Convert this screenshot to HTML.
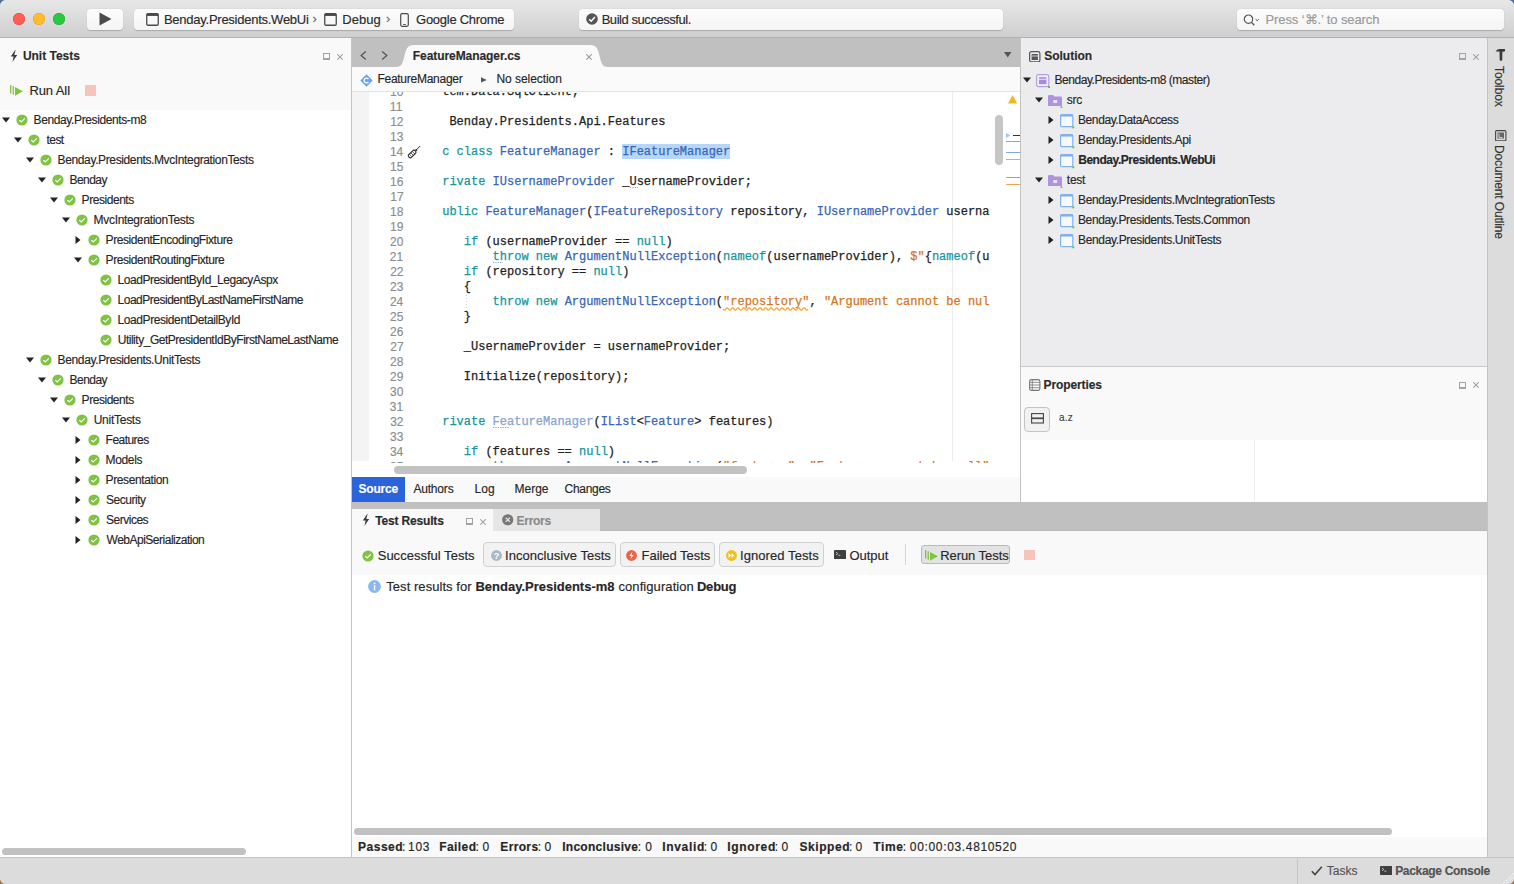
<!DOCTYPE html>
<html><head><meta charset="utf-8"><style>
*{box-sizing:border-box;margin:0;padding:0}
html,body{width:1514px;height:884px;overflow:hidden}
body{background:linear-gradient(#4d6f9c 0,#4d6f9c 50%,#a9763f 50%,#a9763f 100%);font-family:"Liberation Sans",sans-serif;color:#262626;position:relative}
.a{position:absolute}
.t{position:absolute;white-space:nowrap;line-height:1;-webkit-text-stroke:0.15px currentColor}
#win{position:absolute;left:0;top:0;width:1514px;height:884px;border-radius:6px;overflow:hidden;background:#dcdcdc}
.tbox{position:absolute;background:linear-gradient(#fcfcfc,#f4f4f4);border-radius:4px;box-shadow:0 0.5px 1px rgba(0,0,0,.2)}
.btn{position:absolute;background:#f2f2f2;border:1px solid #d0d0d0;border-radius:4px}
</style></head><body><div id="win">
<div class="a" style="left:0px;top:0px;width:1514px;height:37px;background:linear-gradient(#e7e7e7,#cfcfcf)"></div>
<div class="a" style="left:0px;top:37px;width:1514px;height:1px;background:#b1b1b1"></div>
<div class="a" style="left:13.100000000000001px;top:13.1px;width:12px;height:12px;border-radius:50%;background:#fe5f57;box-shadow:inset 0 0 0 0.5px #e2463f"></div>
<div class="a" style="left:33.1px;top:13.1px;width:12px;height:12px;border-radius:50%;background:#febc2e;box-shadow:inset 0 0 0 0.5px #e0a025"></div>
<div class="a" style="left:53.1px;top:13.1px;width:12px;height:12px;border-radius:50%;background:#28c840;box-shadow:inset 0 0 0 0.5px #1fae30"></div>
<div class="tbox" style="left:87px;top:8.5px;width:36px;height:21.5px"></div>
<svg class="a" style="left:99px;top:12px;" width="13" height="14" viewBox="0 0 13 14"><path d="M0.5 0.5 L12.5 7 L0.5 13.5Z" fill="#4a4a4a"/></svg>
<div class="tbox" style="left:133.5px;top:8.5px;width:380px;height:21.5px"></div>
<svg class="a" style="left:145.7px;top:12.8px;" width="13" height="13" viewBox="0 0 13 13"><rect x="0.75" y="0.75" width="11.5" height="11.5" rx="1.2" fill="none" stroke="#4a4a4a" stroke-width="1.3"/><rect x="0.75" y="0.75" width="11.5" height="2.2" fill="#4a4a4a"/></svg>
<div class="t" style="left:163.95px;top:12.50px;font-size:13px;color:#2a2a2a;letter-spacing:-0.255px;">Benday.Presidents.WebUi</div>
<div class="t" style="left:312.45px;top:12.00px;font-size:13px;color:#6a6a6a;">›</div>
<svg class="a" style="left:324.3px;top:12.8px;" width="13" height="13" viewBox="0 0 13 13"><rect x="0.75" y="0.75" width="11.5" height="11.5" rx="1.2" fill="none" stroke="#4a4a4a" stroke-width="1.3"/><rect x="0.75" y="0.75" width="11.5" height="2.2" fill="#4a4a4a"/></svg>
<div class="t" style="left:342.25px;top:12.50px;font-size:13px;color:#2a2a2a;letter-spacing:0.062px;">Debug</div>
<div class="t" style="left:385.95px;top:12.00px;font-size:13px;color:#6a6a6a;">›</div>
<svg class="a" style="left:399.5px;top:12.5px;" width="9" height="14" viewBox="0 0 9 14"><rect x="0.7" y="0.7" width="7.6" height="12.6" rx="1.5" fill="none" stroke="#4a4a4a" stroke-width="1.2"/><rect x="3" y="11" width="3" height="0.8" fill="#4a4a4a"/></svg>
<div class="t" style="left:416.05px;top:12.50px;font-size:13px;color:#2a2a2a;letter-spacing:-0.271px;">Google Chrome</div>
<div class="tbox" style="left:579px;top:8.5px;width:424px;height:21.5px"></div>
<svg class="a" style="left:586px;top:13px;" width="12" height="12" viewBox="0 0 12 12"><circle cx="6" cy="6" r="5.8" fill="#555"/><path d="M3.2 6.2 L5.2 8.2 L8.9 3.9" fill="none" stroke="#fff" stroke-width="1.5"/></svg>
<div class="t" style="left:601.65px;top:12.50px;font-size:13px;color:#2a2a2a;letter-spacing:-0.444px;">Build successful.</div>
<div class="tbox" style="left:1237px;top:8.5px;width:267px;height:21.5px"></div>
<svg class="a" style="left:1243px;top:13.5px;" width="17" height="13" viewBox="0 0 17 13"><circle cx="5.5" cy="5.2" r="4.2" fill="none" stroke="#555" stroke-width="1.2"/><path d="M8.4 8.2 L11.3 11.3" stroke="#555" stroke-width="1.3"/><path d="M12.6 5.2 L14.2 6.7 L15.8 5.2" fill="none" stroke="#555" stroke-width="1"/></svg>
<div class="t" style="left:1265.45px;top:12.50px;font-size:13px;color:#9a9a9a;letter-spacing:-0.095px;">Press ‘⌘.’ to search</div>
<div class="a" style="left:0px;top:38px;width:351px;height:72px;background:#f9f9f9"></div>
<div class="a" style="left:0px;top:110px;width:351px;height:747px;background:#ffffff"></div>
<div class="a" style="left:351px;top:38px;width:1px;height:819px;background:#c6c6c6"></div>
<svg class="a" style="left:10.2px;top:50.2px;" width="8" height="12" viewBox="0 0 8 12"><path d="M5.2 0 L0.8 6.6 L3.6 6.6 L2.4 12 L7.2 4.9 L4.3 4.9 L5.6 0Z" fill="#3a3a3a"/></svg>
<div class="t" style="left:22.90px;top:49.84px;font-size:12px;font-weight:700;color:#2b2b2b;letter-spacing:-0.006px;">Unit Tests</div>
<svg class="a" style="left:323.1px;top:53.1px;" width="7" height="7" viewBox="0 0 7 7"><rect x="0.5" y="0.5" width="6" height="6" fill="none" stroke="#a3a3a3" stroke-width="1"/><rect x="0.5" y="5" width="6" height="1.5" fill="#a3a3a3"/></svg><svg class="a" style="left:336.90000000000003px;top:53.9px;" width="6" height="6" viewBox="0 0 6 6"><path d="M0.3 0.3 L5.7 5.7 M5.7 0.3 L0.3 5.7" stroke="#a3a3a3" stroke-width="1.1"/></svg>
<svg class="a" style="left:9.9px;top:84.5px;" width="13" height="11.5" viewBox="0 0 13 11.5"><rect x="0" y="0" width="1.3" height="8.5" fill="#82c341"/><rect x="2.6" y="1.2" width="1.3" height="8.5" fill="#82c341"/><path d="M5 1.9 L12.9 6.3 L5 10.8Z" fill="#82c341"/></svg>
<div class="t" style="left:29.45px;top:84.30px;font-size:13px;color:#262626;letter-spacing:-0.100px;">Run All</div>
<div class="a" style="left:84.7px;top:84.6px;width:11.200000000000003px;height:11.200000000000003px;background:#f7c4bb"></div>
<svg class="a" style="left:1.7000000000000002px;top:116.7px;" width="8" height="6" viewBox="0 0 8 6"><path d="M0 0.5 L8 0.5 L4 5.5Z" fill="#222"/></svg>
<svg class="a" style="left:16.35px;top:114.2px;" width="12" height="12" viewBox="0 0 12 12"><circle cx="6" cy="6" r="5.6" fill="#80c342"/><path d="M3.3 6.1 L5.2 7.9 L8.8 4.3" fill="none" stroke="#fff" stroke-width="1.2"/></svg>
<div class="t" style="left:33.60px;top:113.64px;font-size:12px;color:#262626;letter-spacing:-0.389px;">Benday.Presidents-m8</div>
<svg class="a" style="left:13.7px;top:136.7px;" width="8" height="6" viewBox="0 0 8 6"><path d="M0 0.5 L8 0.5 L4 5.5Z" fill="#222"/></svg>
<svg class="a" style="left:28.35px;top:134.2px;" width="12" height="12" viewBox="0 0 12 12"><circle cx="6" cy="6" r="5.6" fill="#80c342"/><path d="M3.3 6.1 L5.2 7.9 L8.8 4.3" fill="none" stroke="#fff" stroke-width="1.2"/></svg>
<div class="t" style="left:46.45px;top:133.64px;font-size:12px;color:#262626;letter-spacing:-0.533px;">test</div>
<svg class="a" style="left:25.7px;top:156.7px;" width="8" height="6" viewBox="0 0 8 6"><path d="M0 0.5 L8 0.5 L4 5.5Z" fill="#222"/></svg>
<svg class="a" style="left:40.35px;top:154.2px;" width="12" height="12" viewBox="0 0 12 12"><circle cx="6" cy="6" r="5.6" fill="#80c342"/><path d="M3.3 6.1 L5.2 7.9 L8.8 4.3" fill="none" stroke="#fff" stroke-width="1.2"/></svg>
<div class="t" style="left:57.60px;top:153.64px;font-size:12px;color:#262626;letter-spacing:-0.376px;">Benday.Presidents.MvcIntegrationTests</div>
<svg class="a" style="left:37.7px;top:176.7px;" width="8" height="6" viewBox="0 0 8 6"><path d="M0 0.5 L8 0.5 L4 5.5Z" fill="#222"/></svg>
<svg class="a" style="left:52.35px;top:174.2px;" width="12" height="12" viewBox="0 0 12 12"><circle cx="6" cy="6" r="5.6" fill="#80c342"/><path d="M3.3 6.1 L5.2 7.9 L8.8 4.3" fill="none" stroke="#fff" stroke-width="1.2"/></svg>
<div class="t" style="left:69.60px;top:173.64px;font-size:12px;color:#262626;letter-spacing:-0.580px;">Benday</div>
<svg class="a" style="left:49.7px;top:196.7px;" width="8" height="6" viewBox="0 0 8 6"><path d="M0 0.5 L8 0.5 L4 5.5Z" fill="#222"/></svg>
<svg class="a" style="left:64.35px;top:194.2px;" width="12" height="12" viewBox="0 0 12 12"><circle cx="6" cy="6" r="5.6" fill="#80c342"/><path d="M3.3 6.1 L5.2 7.9 L8.8 4.3" fill="none" stroke="#fff" stroke-width="1.2"/></svg>
<div class="t" style="left:81.60px;top:193.64px;font-size:12px;color:#262626;letter-spacing:-0.450px;">Presidents</div>
<svg class="a" style="left:61.7px;top:216.7px;" width="8" height="6" viewBox="0 0 8 6"><path d="M0 0.5 L8 0.5 L4 5.5Z" fill="#222"/></svg>
<svg class="a" style="left:76.35px;top:214.2px;" width="12" height="12" viewBox="0 0 12 12"><circle cx="6" cy="6" r="5.6" fill="#80c342"/><path d="M3.3 6.1 L5.2 7.9 L8.8 4.3" fill="none" stroke="#fff" stroke-width="1.2"/></svg>
<div class="t" style="left:93.60px;top:213.64px;font-size:12px;color:#262626;letter-spacing:-0.319px;">MvcIntegrationTests</div>
<svg class="a" style="left:75.2px;top:235.7px;" width="6" height="8" viewBox="0 0 6 8"><path d="M0.5 0 L5.5 4 L0.5 8Z" fill="#222"/></svg>
<svg class="a" style="left:88.35px;top:234.2px;" width="12" height="12" viewBox="0 0 12 12"><circle cx="6" cy="6" r="5.6" fill="#80c342"/><path d="M3.3 6.1 L5.2 7.9 L8.8 4.3" fill="none" stroke="#fff" stroke-width="1.2"/></svg>
<div class="t" style="left:105.60px;top:233.64px;font-size:12px;color:#262626;letter-spacing:-0.439px;">PresidentEncodingFixture</div>
<svg class="a" style="left:73.7px;top:256.7px;" width="8" height="6" viewBox="0 0 8 6"><path d="M0 0.5 L8 0.5 L4 5.5Z" fill="#222"/></svg>
<svg class="a" style="left:88.35px;top:254.2px;" width="12" height="12" viewBox="0 0 12 12"><circle cx="6" cy="6" r="5.6" fill="#80c342"/><path d="M3.3 6.1 L5.2 7.9 L8.8 4.3" fill="none" stroke="#fff" stroke-width="1.2"/></svg>
<div class="t" style="left:105.60px;top:253.64px;font-size:12px;color:#262626;letter-spacing:-0.441px;">PresidentRoutingFixture</div>
<svg class="a" style="left:100.35px;top:274.2px;" width="12" height="12" viewBox="0 0 12 12"><circle cx="6" cy="6" r="5.6" fill="#80c342"/><path d="M3.3 6.1 L5.2 7.9 L8.8 4.3" fill="none" stroke="#fff" stroke-width="1.2"/></svg>
<div class="t" style="left:117.60px;top:273.64px;font-size:12px;color:#262626;letter-spacing:-0.478px;">LoadPresidentById_LegacyAspx</div>
<svg class="a" style="left:100.35px;top:294.2px;" width="12" height="12" viewBox="0 0 12 12"><circle cx="6" cy="6" r="5.6" fill="#80c342"/><path d="M3.3 6.1 L5.2 7.9 L8.8 4.3" fill="none" stroke="#fff" stroke-width="1.2"/></svg>
<div class="t" style="left:117.60px;top:293.64px;font-size:12px;color:#262626;letter-spacing:-0.500px;">LoadPresidentByLastNameFirstName</div>
<svg class="a" style="left:100.35px;top:314.2px;" width="12" height="12" viewBox="0 0 12 12"><circle cx="6" cy="6" r="5.6" fill="#80c342"/><path d="M3.3 6.1 L5.2 7.9 L8.8 4.3" fill="none" stroke="#fff" stroke-width="1.2"/></svg>
<div class="t" style="left:117.60px;top:313.64px;font-size:12px;color:#262626;letter-spacing:-0.418px;">LoadPresidentDetailById</div>
<svg class="a" style="left:100.35px;top:334.2px;" width="12" height="12" viewBox="0 0 12 12"><circle cx="6" cy="6" r="5.6" fill="#80c342"/><path d="M3.3 6.1 L5.2 7.9 L8.8 4.3" fill="none" stroke="#fff" stroke-width="1.2"/></svg>
<div class="t" style="left:117.70px;top:333.64px;font-size:12px;color:#262626;letter-spacing:-0.476px;">Utility_GetPresidentIdByFirstNameLastName</div>
<svg class="a" style="left:25.7px;top:356.7px;" width="8" height="6" viewBox="0 0 8 6"><path d="M0 0.5 L8 0.5 L4 5.5Z" fill="#222"/></svg>
<svg class="a" style="left:40.35px;top:354.2px;" width="12" height="12" viewBox="0 0 12 12"><circle cx="6" cy="6" r="5.6" fill="#80c342"/><path d="M3.3 6.1 L5.2 7.9 L8.8 4.3" fill="none" stroke="#fff" stroke-width="1.2"/></svg>
<div class="t" style="left:57.60px;top:353.64px;font-size:12px;color:#262626;letter-spacing:-0.373px;">Benday.Presidents.UnitTests</div>
<svg class="a" style="left:37.7px;top:376.7px;" width="8" height="6" viewBox="0 0 8 6"><path d="M0 0.5 L8 0.5 L4 5.5Z" fill="#222"/></svg>
<svg class="a" style="left:52.35px;top:374.2px;" width="12" height="12" viewBox="0 0 12 12"><circle cx="6" cy="6" r="5.6" fill="#80c342"/><path d="M3.3 6.1 L5.2 7.9 L8.8 4.3" fill="none" stroke="#fff" stroke-width="1.2"/></svg>
<div class="t" style="left:69.60px;top:373.64px;font-size:12px;color:#262626;letter-spacing:-0.560px;">Benday</div>
<svg class="a" style="left:49.7px;top:396.7px;" width="8" height="6" viewBox="0 0 8 6"><path d="M0 0.5 L8 0.5 L4 5.5Z" fill="#222"/></svg>
<svg class="a" style="left:64.35px;top:394.2px;" width="12" height="12" viewBox="0 0 12 12"><circle cx="6" cy="6" r="5.6" fill="#80c342"/><path d="M3.3 6.1 L5.2 7.9 L8.8 4.3" fill="none" stroke="#fff" stroke-width="1.2"/></svg>
<div class="t" style="left:81.60px;top:393.64px;font-size:12px;color:#262626;letter-spacing:-0.461px;">Presidents</div>
<svg class="a" style="left:61.7px;top:416.7px;" width="8" height="6" viewBox="0 0 8 6"><path d="M0 0.5 L8 0.5 L4 5.5Z" fill="#222"/></svg>
<svg class="a" style="left:76.35px;top:414.2px;" width="12" height="12" viewBox="0 0 12 12"><circle cx="6" cy="6" r="5.6" fill="#80c342"/><path d="M3.3 6.1 L5.2 7.9 L8.8 4.3" fill="none" stroke="#fff" stroke-width="1.2"/></svg>
<div class="t" style="left:93.70px;top:413.64px;font-size:12px;color:#262626;letter-spacing:-0.262px;">UnitTests</div>
<svg class="a" style="left:75.2px;top:435.7px;" width="6" height="8" viewBox="0 0 6 8"><path d="M0.5 0 L5.5 4 L0.5 8Z" fill="#222"/></svg>
<svg class="a" style="left:88.35px;top:434.2px;" width="12" height="12" viewBox="0 0 12 12"><circle cx="6" cy="6" r="5.6" fill="#80c342"/><path d="M3.3 6.1 L5.2 7.9 L8.8 4.3" fill="none" stroke="#fff" stroke-width="1.2"/></svg>
<div class="t" style="left:105.60px;top:433.64px;font-size:12px;color:#262626;letter-spacing:-0.543px;">Features</div>
<svg class="a" style="left:75.2px;top:455.7px;" width="6" height="8" viewBox="0 0 6 8"><path d="M0.5 0 L5.5 4 L0.5 8Z" fill="#222"/></svg>
<svg class="a" style="left:88.35px;top:454.2px;" width="12" height="12" viewBox="0 0 12 12"><circle cx="6" cy="6" r="5.6" fill="#80c342"/><path d="M3.3 6.1 L5.2 7.9 L8.8 4.3" fill="none" stroke="#fff" stroke-width="1.2"/></svg>
<div class="t" style="left:105.60px;top:453.64px;font-size:12px;color:#262626;letter-spacing:-0.370px;">Models</div>
<svg class="a" style="left:75.2px;top:475.7px;" width="6" height="8" viewBox="0 0 6 8"><path d="M0.5 0 L5.5 4 L0.5 8Z" fill="#222"/></svg>
<svg class="a" style="left:88.35px;top:474.2px;" width="12" height="12" viewBox="0 0 12 12"><circle cx="6" cy="6" r="5.6" fill="#80c342"/><path d="M3.3 6.1 L5.2 7.9 L8.8 4.3" fill="none" stroke="#fff" stroke-width="1.2"/></svg>
<div class="t" style="left:105.60px;top:473.64px;font-size:12px;color:#262626;letter-spacing:-0.391px;">Presentation</div>
<svg class="a" style="left:75.2px;top:495.7px;" width="6" height="8" viewBox="0 0 6 8"><path d="M0.5 0 L5.5 4 L0.5 8Z" fill="#222"/></svg>
<svg class="a" style="left:88.35px;top:494.2px;" width="12" height="12" viewBox="0 0 12 12"><circle cx="6" cy="6" r="5.6" fill="#80c342"/><path d="M3.3 6.1 L5.2 7.9 L8.8 4.3" fill="none" stroke="#fff" stroke-width="1.2"/></svg>
<div class="t" style="left:106.05px;top:493.64px;font-size:12px;color:#262626;letter-spacing:-0.486px;">Security</div>
<svg class="a" style="left:75.2px;top:515.7px;" width="6" height="8" viewBox="0 0 6 8"><path d="M0.5 0 L5.5 4 L0.5 8Z" fill="#222"/></svg>
<svg class="a" style="left:88.35px;top:514.2px;" width="12" height="12" viewBox="0 0 12 12"><circle cx="6" cy="6" r="5.6" fill="#80c342"/><path d="M3.3 6.1 L5.2 7.9 L8.8 4.3" fill="none" stroke="#fff" stroke-width="1.2"/></svg>
<div class="t" style="left:106.05px;top:513.64px;font-size:12px;color:#262626;letter-spacing:-0.500px;">Services</div>
<svg class="a" style="left:75.2px;top:535.7px;" width="6" height="8" viewBox="0 0 6 8"><path d="M0.5 0 L5.5 4 L0.5 8Z" fill="#222"/></svg>
<svg class="a" style="left:88.35px;top:534.2px;" width="12" height="12" viewBox="0 0 12 12"><circle cx="6" cy="6" r="5.6" fill="#80c342"/><path d="M3.3 6.1 L5.2 7.9 L8.8 4.3" fill="none" stroke="#fff" stroke-width="1.2"/></svg>
<div class="t" style="left:106.55px;top:533.64px;font-size:12px;color:#262626;letter-spacing:-0.497px;">WebApiSerialization</div>
<div class="a" style="left:2px;top:848.2px;width:244px;height:6.599999999999909px;background:#c1c1c1;border-radius:4px"></div>
<div class="a" style="left:352px;top:38px;width:668px;height:29px;background:#c0c0c0"></div>
<div class="a" style="left:1020px;top:38px;width:1px;height:464px;background:#c4c4c4"></div>
<svg class="a" style="left:359.5px;top:50.5px;" width="7" height="9" viewBox="0 0 7 9"><path d="M5.8 0.6 L1.2 4.5 L5.8 8.4" fill="none" stroke="#555" stroke-width="1.3"/></svg>
<svg class="a" style="left:380.5px;top:50.5px;" width="7" height="9" viewBox="0 0 7 9"><path d="M1.2 0.6 L5.8 4.5 L1.2 8.4" fill="none" stroke="#555" stroke-width="1.3"/></svg>
<svg class="a" style="left:390px;top:44px;" width="230" height="23" viewBox="0 0 230 23"><path d="M5 23 C11 23 12 21 14 14 C16 5 17 1 24 1 L200 1 C207 1 208 5 210 14 C212 21 213 23 219 23 Z" fill="#fafafa"/></svg>
<div class="t" style="left:412.80px;top:49.84px;font-size:12px;font-weight:700;color:#2b2b2b;letter-spacing:-0.066px;">FeatureManager.cs</div>
<svg class="a" style="left:586px;top:54px;" width="6" height="6" viewBox="0 0 6 6"><path d="M0.3 0.3 L5.7 5.7 M5.7 0.3 L0.3 5.7" stroke="#9a9a9a" stroke-width="1.1"/></svg>
<svg class="a" style="left:1004px;top:52px;" width="8" height="6" viewBox="0 0 8 6"><path d="M0 0 L7.5 0 L3.75 5.5Z" fill="#555"/></svg>
<div class="a" style="left:352px;top:67px;width:668px;height:24px;background:#fafafa"></div>
<div class="a" style="left:352px;top:91px;width:668px;height:1px;background:#e3e3e3"></div>
<svg class="a" style="left:359.7px;top:73.8px;" width="13" height="13" viewBox="0 0 13 13"><path d="M6.5 0.3 L12.7 6.5 L6.5 12.7 L0.3 6.5Z" fill="#6aa3ea"/><path d="M8.4 5.0 A2.4 2.4 0 1 0 8.4 8.0" fill="none" stroke="#fff" stroke-width="1.3"/></svg>
<div class="t" style="left:377.40px;top:73.04px;font-size:12px;color:#262626;letter-spacing:-0.258px;">FeatureManager</div>
<svg class="a" style="left:480.8px;top:77px;" width="6" height="6" viewBox="0 0 6 6"><path d="M0 0.2 L5.8 2.9 L0 5.6Z" fill="#555"/></svg>
<div class="t" style="left:496.50px;top:73.04px;font-size:12px;color:#262626;letter-spacing:-0.059px;">No selection</div>
<div class="a" style="left:352px;top:92px;width:668px;height:385px;background:#ffffff"></div>
<div class="a" style="left:352px;top:92px;width:17px;height:369px;background:#f4f4f4"></div>
<div class="a" style="left:952px;top:92px;width:1px;height:369px;background:#ececec"></div>
<div class="a" style="left:621.7px;top:144px;width:108.0px;height:15px;background:#b6d6f7"></div>
<div class="a" style="left:0;top:92px;width:991px;height:371px;overflow:hidden"><div class="a" style="left:0;top:-92px;width:991px;height:500px"><div class="t" style="left:390.05px;top:85.80px;font-size:12px;color:#8c8c8c;font-family:"Liberation Mono",monospace;">10</div><div class="t" style="left:442.2px;top:85.80px;font-size:12px;font-family:'Liberation Mono',monospace;color:#222222;white-space:pre;-webkit-text-stroke:0.25px currentColor"><span style="color:#222222">tem.Data.SqlClient;</span></div><div class="t" style="left:389.85px;top:100.80px;font-size:12px;color:#8c8c8c;font-family:"Liberation Mono",monospace;">11</div><div class="t" style="left:390.15px;top:115.80px;font-size:12px;color:#8c8c8c;font-family:"Liberation Mono",monospace;">12</div><div class="t" style="left:442.2px;top:115.80px;font-size:12px;font-family:'Liberation Mono',monospace;color:#222222;white-space:pre;-webkit-text-stroke:0.25px currentColor"><span style="color:#222222"> Benday.Presidents.Api.Features</span></div><div class="t" style="left:390.05px;top:130.80px;font-size:12px;color:#8c8c8c;font-family:"Liberation Mono",monospace;">13</div><div class="t" style="left:389.90px;top:145.80px;font-size:12px;color:#8c8c8c;font-family:"Liberation Mono",monospace;">14</div><div class="t" style="left:442.2px;top:145.80px;font-size:12px;font-family:'Liberation Mono',monospace;color:#222222;white-space:pre;-webkit-text-stroke:0.25px currentColor"><span style="color:#17969b">c class</span><span style="color:#222222"> </span><span style="color:#3866b4">FeatureManager</span><span style="color:#222222"> : </span><span style="color:#3866b4">IFeatureManager</span></div><div class="t" style="left:390.05px;top:160.80px;font-size:12px;color:#8c8c8c;font-family:"Liberation Mono",monospace;">15</div><div class="t" style="left:390.05px;top:175.80px;font-size:12px;color:#8c8c8c;font-family:"Liberation Mono",monospace;">16</div><div class="t" style="left:442.2px;top:175.80px;font-size:12px;font-family:'Liberation Mono',monospace;color:#222222;white-space:pre;-webkit-text-stroke:0.25px currentColor"><span style="color:#17969b">rivate</span><span style="color:#222222"> </span><span style="color:#3866b4">IUsernameProvider</span><span style="color:#222222"> _UsernameProvider;</span></div><div class="t" style="left:390.25px;top:190.80px;font-size:12px;color:#8c8c8c;font-family:"Liberation Mono",monospace;">17</div><div class="t" style="left:390.10px;top:205.80px;font-size:12px;color:#8c8c8c;font-family:"Liberation Mono",monospace;">18</div><div class="t" style="left:442.2px;top:205.80px;font-size:12px;font-family:'Liberation Mono',monospace;color:#222222;white-space:pre;-webkit-text-stroke:0.25px currentColor"><span style="color:#17969b">ublic</span><span style="color:#222222"> </span><span style="color:#3866b4">FeatureManager</span><span style="color:#222222">(</span><span style="color:#3866b4">IFeatureRepository</span><span style="color:#222222"> repository, </span><span style="color:#3866b4">IUsernameProvider</span><span style="color:#222222"> userna</span></div><div class="t" style="left:390.10px;top:220.80px;font-size:12px;color:#8c8c8c;font-family:"Liberation Mono",monospace;">19</div><div class="t" style="left:390.05px;top:235.80px;font-size:12px;color:#8c8c8c;font-family:"Liberation Mono",monospace;">20</div><div class="t" style="left:442.2px;top:235.80px;font-size:12px;font-family:'Liberation Mono',monospace;color:#222222;white-space:pre;-webkit-text-stroke:0.25px currentColor"><span style="color:#222222">   </span><span style="color:#17969b">if</span><span style="color:#222222"> (usernameProvider == </span><span style="color:#17969b">null</span><span style="color:#222222">)</span></div><div class="t" style="left:389.85px;top:250.80px;font-size:12px;color:#8c8c8c;font-family:"Liberation Mono",monospace;">21</div><div class="t" style="left:442.2px;top:250.80px;font-size:12px;font-family:'Liberation Mono',monospace;color:#222222;white-space:pre;-webkit-text-stroke:0.25px currentColor"><span style="color:#222222">       </span><span style="color:#17969b">throw new</span><span style="color:#222222"> </span><span style="color:#3866b4">ArgumentNullException</span><span style="color:#222222">(</span><span style="color:#17969b">nameof</span><span style="color:#222222">(usernameProvider), </span><span style="color:#d6761b">$&quot;</span><span style="color:#222222">{</span><span style="color:#17969b">nameof</span><span style="color:#222222">(u</span></div><div class="t" style="left:390.15px;top:265.80px;font-size:12px;color:#8c8c8c;font-family:"Liberation Mono",monospace;">22</div><div class="t" style="left:442.2px;top:265.80px;font-size:12px;font-family:'Liberation Mono',monospace;color:#222222;white-space:pre;-webkit-text-stroke:0.25px currentColor"><span style="color:#222222">   </span><span style="color:#17969b">if</span><span style="color:#222222"> (repository == </span><span style="color:#17969b">null</span><span style="color:#222222">)</span></div><div class="t" style="left:390.05px;top:280.80px;font-size:12px;color:#8c8c8c;font-family:"Liberation Mono",monospace;">23</div><div class="t" style="left:442.2px;top:280.80px;font-size:12px;font-family:'Liberation Mono',monospace;color:#222222;white-space:pre;-webkit-text-stroke:0.25px currentColor"><span style="color:#222222">   {</span></div><div class="t" style="left:389.90px;top:295.80px;font-size:12px;color:#8c8c8c;font-family:"Liberation Mono",monospace;">24</div><div class="t" style="left:442.2px;top:295.80px;font-size:12px;font-family:'Liberation Mono',monospace;color:#222222;white-space:pre;-webkit-text-stroke:0.25px currentColor"><span style="color:#222222">       </span><span style="color:#17969b">throw new</span><span style="color:#222222"> </span><span style="color:#3866b4">ArgumentNullException</span><span style="color:#222222">(</span><span style="color:#d6761b">&quot;repository&quot;</span><span style="color:#222222">, </span><span style="color:#d6761b">&quot;Argument cannot be nul</span></div><div class="t" style="left:390.05px;top:310.80px;font-size:12px;color:#8c8c8c;font-family:"Liberation Mono",monospace;">25</div><div class="t" style="left:442.2px;top:310.80px;font-size:12px;font-family:'Liberation Mono',monospace;color:#222222;white-space:pre;-webkit-text-stroke:0.25px currentColor"><span style="color:#222222">   }</span></div><div class="t" style="left:390.05px;top:325.80px;font-size:12px;color:#8c8c8c;font-family:"Liberation Mono",monospace;">26</div><div class="t" style="left:390.25px;top:340.80px;font-size:12px;color:#8c8c8c;font-family:"Liberation Mono",monospace;">27</div><div class="t" style="left:442.2px;top:340.80px;font-size:12px;font-family:'Liberation Mono',monospace;color:#222222;white-space:pre;-webkit-text-stroke:0.25px currentColor"><span style="color:#222222">   _UsernameProvider = usernameProvider;</span></div><div class="t" style="left:390.10px;top:355.80px;font-size:12px;color:#8c8c8c;font-family:"Liberation Mono",monospace;">28</div><div class="t" style="left:390.10px;top:370.80px;font-size:12px;color:#8c8c8c;font-family:"Liberation Mono",monospace;">29</div><div class="t" style="left:442.2px;top:370.80px;font-size:12px;font-family:'Liberation Mono',monospace;color:#222222;white-space:pre;-webkit-text-stroke:0.25px currentColor"><span style="color:#222222">   Initialize(repository);</span></div><div class="t" style="left:390.05px;top:385.80px;font-size:12px;color:#8c8c8c;font-family:"Liberation Mono",monospace;">30</div><div class="t" style="left:389.85px;top:400.80px;font-size:12px;color:#8c8c8c;font-family:"Liberation Mono",monospace;">31</div><div class="t" style="left:390.15px;top:415.80px;font-size:12px;color:#8c8c8c;font-family:"Liberation Mono",monospace;">32</div><div class="t" style="left:442.2px;top:415.80px;font-size:12px;font-family:'Liberation Mono',monospace;color:#222222;white-space:pre;-webkit-text-stroke:0.25px currentColor"><span style="color:#17969b">rivate</span><span style="color:#222222"> </span><span style="color:#86a3d2">FeatureManager</span><span style="color:#222222">(</span><span style="color:#3866b4">IList</span><span style="color:#222222">&lt;</span><span style="color:#3866b4">Feature</span><span style="color:#222222">&gt; features)</span></div><div class="t" style="left:390.05px;top:430.80px;font-size:12px;color:#8c8c8c;font-family:"Liberation Mono",monospace;">33</div><div class="t" style="left:389.90px;top:445.80px;font-size:12px;color:#8c8c8c;font-family:"Liberation Mono",monospace;">34</div><div class="t" style="left:442.2px;top:445.80px;font-size:12px;font-family:'Liberation Mono',monospace;color:#222222;white-space:pre;-webkit-text-stroke:0.25px currentColor"><span style="color:#222222">   </span><span style="color:#17969b">if</span><span style="color:#222222"> (features == </span><span style="color:#17969b">null</span><span style="color:#222222">)</span></div><div class="t" style="left:390.05px;top:460.80px;font-size:12px;color:#8c8c8c;font-family:"Liberation Mono",monospace;">35</div><div class="t" style="left:442.2px;top:460.80px;font-size:12px;font-family:'Liberation Mono',monospace;color:#222222;white-space:pre;-webkit-text-stroke:0.25px currentColor"><span style="color:#222222">       </span><span style="color:#17969b">throw new</span><span style="color:#222222"> </span><span style="color:#3866b4">ArgumentNullException</span><span style="color:#222222">(</span><span style="color:#d6761b">&quot;features&quot;</span><span style="color:#222222">, </span><span style="color:#d6761b">&quot;Features cannot be null&quot;</span></div></div></div>
<svg class="a" style="left:722.8px;top:307px;" width="86" height="4" viewBox="0 0 86 4"><path d="M0.00 2.00 L0.50 2.65 L1.00 3.09 L1.50 3.19 L2.00 2.91 L2.50 2.34 L3.00 1.66 L3.50 1.09 L4.00 0.81 L4.50 0.91 L5.00 1.35 L5.50 2.00 L6.00 2.65 L6.50 3.09 L7.00 3.19 L7.50 2.91 L8.00 2.34 L8.50 1.66 L9.00 1.09 L9.50 0.81 L10.00 0.91 L10.50 1.35 L11.00 2.00 L11.50 2.65 L12.00 3.09 L12.50 3.19 L13.00 2.91 L13.50 2.34 L14.00 1.66 L14.50 1.09 L15.00 0.81 L15.50 0.91 L16.00 1.35 L16.50 2.00 L17.00 2.65 L17.50 3.09 L18.00 3.19 L18.50 2.91 L19.00 2.34 L19.50 1.66 L20.00 1.09 L20.50 0.81 L21.00 0.91 L21.50 1.35 L22.00 2.00 L22.50 2.65 L23.00 3.09 L23.50 3.19 L24.00 2.91 L24.50 2.34 L25.00 1.66 L25.50 1.09 L26.00 0.81 L26.50 0.91 L27.00 1.35 L27.50 2.00 L28.00 2.65 L28.50 3.09 L29.00 3.19 L29.50 2.91 L30.00 2.34 L30.50 1.66 L31.00 1.09 L31.50 0.81 L32.00 0.91 L32.50 1.35 L33.00 2.00 L33.50 2.65 L34.00 3.09 L34.50 3.19 L35.00 2.91 L35.50 2.34 L36.00 1.66 L36.50 1.09 L37.00 0.81 L37.50 0.91 L38.00 1.35 L38.50 2.00 L39.00 2.65 L39.50 3.09 L40.00 3.19 L40.50 2.91 L41.00 2.34 L41.50 1.66 L42.00 1.09 L42.50 0.81 L43.00 0.91 L43.50 1.35 L44.00 2.00 L44.50 2.65 L45.00 3.09 L45.50 3.19 L46.00 2.91 L46.50 2.34 L47.00 1.66 L47.50 1.09 L48.00 0.81 L48.50 0.91 L49.00 1.35 L49.50 2.00 L50.00 2.65 L50.50 3.09 L51.00 3.19 L51.50 2.91 L52.00 2.34 L52.50 1.66 L53.00 1.09 L53.50 0.81 L54.00 0.91 L54.50 1.35 L55.00 2.00 L55.50 2.65 L56.00 3.09 L56.50 3.19 L57.00 2.91 L57.50 2.34 L58.00 1.66 L58.50 1.09 L59.00 0.81 L59.50 0.91 L60.00 1.35 L60.50 2.00 L61.00 2.65 L61.50 3.09 L62.00 3.19 L62.50 2.91 L63.00 2.34 L63.50 1.66 L64.00 1.09 L64.50 0.81 L65.00 0.91 L65.50 1.35 L66.00 2.00 L66.50 2.65 L67.00 3.09 L67.50 3.19 L68.00 2.91 L68.50 2.34 L69.00 1.66 L69.50 1.09 L70.00 0.81 L70.50 0.91 L71.00 1.35 L71.50 2.00 L72.00 2.65 L72.50 3.09 L73.00 3.19 L73.50 2.91 L74.00 2.34 L74.50 1.66 L75.00 1.09 L75.50 0.81 L76.00 0.91 L76.50 1.35 L77.00 2.00 L77.50 2.65 L78.00 3.09 L78.50 3.19 L79.00 2.91 L79.50 2.34 L80.00 1.66 L80.50 1.09 L81.00 0.81 L81.50 0.91 L82.00 1.35 L82.50 2.00 L83.00 2.65 L83.50 3.09 L84.00 3.19 L84.50 2.91 L85.00 2.34" fill="none" stroke="#f5a73a" stroke-width="1.3"/></svg>
<svg class="a" style="left:492.59999999999997px;top:427px;" width="16" height="2" viewBox="0 0 16 2"><path d="M0 0.5 H16" stroke="#7aa0e0" stroke-width="1" stroke-dasharray="1.2 1.2"/></svg>
<svg class="a" style="left:629.9px;top:187px;" width="8" height="2" viewBox="0 0 8 2"><path d="M0 0.5 H8" stroke="#7aa0e0" stroke-width="1" stroke-dasharray="1.2 1.2"/></svg>
<svg class="a" style="left:492.59999999999997px;top:262px;" width="10" height="2" viewBox="0 0 10 2"><path d="M0 0.5 H10" stroke="#7aa0e0" stroke-width="1" stroke-dasharray="1.2 1.2"/></svg>
<div class="a" style="left:465.5px;top:289px;width:1.0px;height:22px;background:repeating-linear-gradient(#d8d8d8 0 1px,transparent 1px 3px)"></div>
<svg class="a" style="left:407px;top:145px;" width="14" height="14" viewBox="0 0 14 14"><path d="M9 5.2 L13.2 1" stroke="#333" stroke-width="1"/><path d="M8.6 4.4 L9.8 5.6" stroke="#333" stroke-width="1.8"/><g transform="rotate(-45 5 9)"><rect x="0.6" y="7.2" width="9" height="3.8" rx="1.9" fill="#fff" stroke="#333" stroke-width="1.1"/><path d="M3 7.4 V10.8 M5 7.4 V10.8 M7 7.4 V10.8" stroke="#333" stroke-width="0.7"/></g></svg>
<div class="a" style="left:394px;top:466px;width:353px;height:8px;background:#c2c2c2;border-radius:4px"></div>
<div class="a" style="left:995px;top:114.7px;width:8px;height:50.7px;background:#c6c6c6;border-radius:4px"></div>
<svg class="a" style="left:1008.3px;top:94.5px;" width="10" height="9" viewBox="0 0 10 9"><path d="M4.6 0 L9.3 8.5 L0 8.5Z" fill="#ecb824"/></svg>
<svg class="a" style="left:1005.5px;top:132.5px;" width="5" height="5" viewBox="0 0 5 5"><path d="M0 0 L4.5 2.5 L0 5Z" fill="#9fc9ef"/></svg>
<div class="a" style="left:1013px;top:135px;width:7px;height:1.1999999999999886px;background:#333"></div>
<div class="a" style="left:1006px;top:140.6px;width:14px;height:1.5999999999999943px;background:#7fa6e6"></div>
<div class="a" style="left:1006px;top:151.5px;width:14px;height:1.5999999999999943px;background:#7fa6e6"></div>
<div class="a" style="left:1006px;top:158.5px;width:14px;height:1.5999999999999943px;background:#f0a64a"></div>
<div class="a" style="left:1006px;top:176.5px;width:14px;height:1.5999999999999943px;background:#7fa6e6"></div>
<div class="a" style="left:1006px;top:183.6px;width:14px;height:1.5999999999999943px;background:#f0a64a"></div>
<div class="a" style="left:352px;top:477px;width:668px;height:25px;background:#f9f9f9"></div>
<div class="a" style="left:352px;top:477px;width:52.80000000000001px;height:25px;background:#2b63da"></div>
<div class="t" style="left:358.55px;top:482.94px;font-size:12px;font-weight:700;color:#ffffff;letter-spacing:-0.220px;">Source</div>
<div class="t" style="left:413.40px;top:482.94px;font-size:12px;color:#262626;letter-spacing:-0.183px;">Authors</div>
<div class="t" style="left:474.40px;top:482.94px;font-size:12px;color:#262626;letter-spacing:0.125px;">Log</div>
<div class="t" style="left:514.50px;top:482.94px;font-size:12px;color:#262626;">Merge</div>
<div class="t" style="left:564.50px;top:482.94px;font-size:12px;color:#262626;letter-spacing:-0.283px;">Changes</div>
<div class="a" style="left:1021px;top:38px;width:466px;height:328px;background:#ececef"></div>
<div class="a" style="left:1021px;top:366px;width:466px;height:1px;background:#c9c9cc"></div>
<svg class="a" style="left:1029px;top:50.6px;" width="11.5" height="11.5" viewBox="0 0 11.5 11.5"><rect x="0.6" y="0.6" width="10.3" height="10.3" rx="1.8" fill="none" stroke="#555" stroke-width="1.2"/><rect x="2.6" y="3" width="6.3" height="6" fill="#555"/><rect x="2.6" y="4.6" width="6.3" height="0.8" fill="#ececef"/></svg>
<div class="t" style="left:1044.15px;top:49.84px;font-size:12px;font-weight:700;color:#2b2b2b;">Solution</div>
<svg class="a" style="left:1458.7px;top:53.2px;" width="7" height="7" viewBox="0 0 7 7"><rect x="0.5" y="0.5" width="6" height="6" fill="none" stroke="#a3a3a3" stroke-width="1"/><rect x="0.5" y="5" width="6" height="1.5" fill="#a3a3a3"/></svg><svg class="a" style="left:1472.5px;top:54.0px;" width="6" height="6" viewBox="0 0 6 6"><path d="M0.3 0.3 L5.7 5.7 M5.7 0.3 L0.3 5.7" stroke="#a3a3a3" stroke-width="1.1"/></svg>
<svg class="a" style="left:1022.5px;top:76.7px;" width="8" height="6" viewBox="0 0 8 6"><path d="M0 0.5 L8 0.5 L4 5.5Z" fill="#222"/></svg>
<svg class="a" style="left:1036px;top:74.0px;" width="14" height="14" viewBox="0 0 14 14"><rect x="0.6" y="0.6" width="12.2" height="12" rx="1.8" fill="#f3effa" stroke="#b79fe0" stroke-width="1.2"/><rect x="3" y="3.2" width="7.4" height="7" fill="#a98bdc"/><rect x="3" y="4.8" width="7.4" height="0.9" fill="#f3effa"/><rect x="12" y="12" width="2" height="2" fill="#6ac13a"/></svg>
<div class="t" style="left:1054.50px;top:73.64px;font-size:12px;color:#262626;letter-spacing:-0.455px;">Benday.Presidents-m8 (master)</div>
<svg class="a" style="left:1034.5px;top:96.7px;" width="8" height="6" viewBox="0 0 8 6"><path d="M0 0.5 L8 0.5 L4 5.5Z" fill="#222"/></svg>
<svg class="a" style="left:1048px;top:94.5px;" width="15" height="13" viewBox="0 0 15 13"><path d="M0 1.2 Q0 0 1.2 0 L5 0 L6.5 1.6 L13 1.6 Q14 1.6 14 2.6 L14 11 L0 11Z" fill="#ae93de"/><rect x="5.2" y="5" width="4" height="3" fill="#e9e1f7"/><rect x="12.5" y="11.5" width="2" height="2" fill="#6ac13a"/></svg>
<div class="t" style="left:1066.65px;top:93.64px;font-size:12px;color:#262626;letter-spacing:-0.175px;">src</div>
<svg class="a" style="left:1048px;top:115.7px;" width="6" height="8" viewBox="0 0 6 8"><path d="M0.5 0 L5.5 4 L0.5 8Z" fill="#222"/></svg>
<svg class="a" style="left:1060.2px;top:114.0px;" width="15" height="15" viewBox="0 0 15 15"><rect x="0.6" y="0.6" width="12.2" height="12" rx="1.2" fill="#f7f9fd" stroke="#7fb1ef" stroke-width="1.2"/><rect x="0.6" y="0.6" width="12.2" height="2" fill="#7fb1ef"/><rect x="12.3" y="12.3" width="2" height="2" fill="#6ac13a"/></svg>
<div class="t" style="left:1078.00px;top:113.64px;font-size:12px;color:#262626;letter-spacing:-0.406px;">Benday.DataAccess</div>
<svg class="a" style="left:1048px;top:135.7px;" width="6" height="8" viewBox="0 0 6 8"><path d="M0.5 0 L5.5 4 L0.5 8Z" fill="#222"/></svg>
<svg class="a" style="left:1060.2px;top:134.0px;" width="15" height="15" viewBox="0 0 15 15"><rect x="0.6" y="0.6" width="12.2" height="12" rx="1.2" fill="#f7f9fd" stroke="#7fb1ef" stroke-width="1.2"/><rect x="0.6" y="0.6" width="12.2" height="2" fill="#7fb1ef"/><rect x="12.3" y="12.3" width="2" height="2" fill="#6ac13a"/></svg>
<div class="t" style="left:1078.00px;top:133.64px;font-size:12px;color:#262626;letter-spacing:-0.370px;">Benday.Presidents.Api</div>
<svg class="a" style="left:1048px;top:155.7px;" width="6" height="8" viewBox="0 0 6 8"><path d="M0.5 0 L5.5 4 L0.5 8Z" fill="#222"/></svg>
<svg class="a" style="left:1060.2px;top:154.0px;" width="15" height="15" viewBox="0 0 15 15"><rect x="0.6" y="0.6" width="12.2" height="12" rx="1.2" fill="#f7f9fd" stroke="#7fb1ef" stroke-width="1.2"/><rect x="0.6" y="0.6" width="12.2" height="2" fill="#7fb1ef"/><rect x="12.3" y="12.3" width="2" height="2" fill="#6ac13a"/></svg>
<div class="t" style="left:1078.20px;top:153.64px;font-size:12px;font-weight:700;color:#262626;letter-spacing:-0.461px;">Benday.Presidents.WebUi</div>
<svg class="a" style="left:1034.5px;top:176.7px;" width="8" height="6" viewBox="0 0 8 6"><path d="M0 0.5 L8 0.5 L4 5.5Z" fill="#222"/></svg>
<svg class="a" style="left:1048px;top:174.5px;" width="15" height="13" viewBox="0 0 15 13"><path d="M0 1.2 Q0 0 1.2 0 L5 0 L6.5 1.6 L13 1.6 Q14 1.6 14 2.6 L14 11 L0 11Z" fill="#ae93de"/><rect x="5.2" y="5" width="4" height="3" fill="#e9e1f7"/><rect x="12.5" y="11.5" width="2" height="2" fill="#6ac13a"/></svg>
<div class="t" style="left:1066.85px;top:173.64px;font-size:12px;color:#262626;letter-spacing:-0.267px;">test</div>
<svg class="a" style="left:1048px;top:195.7px;" width="6" height="8" viewBox="0 0 6 8"><path d="M0.5 0 L5.5 4 L0.5 8Z" fill="#222"/></svg>
<svg class="a" style="left:1060.2px;top:194.0px;" width="15" height="15" viewBox="0 0 15 15"><rect x="0.6" y="0.6" width="12.2" height="12" rx="1.2" fill="#f7f9fd" stroke="#7fb1ef" stroke-width="1.2"/><rect x="0.6" y="0.6" width="12.2" height="2" fill="#7fb1ef"/><rect x="12.3" y="12.3" width="2" height="2" fill="#6ac13a"/></svg>
<div class="t" style="left:1078.00px;top:193.64px;font-size:12px;color:#262626;letter-spacing:-0.360px;">Benday.Presidents.MvcIntegrationTests</div>
<svg class="a" style="left:1048px;top:215.7px;" width="6" height="8" viewBox="0 0 6 8"><path d="M0.5 0 L5.5 4 L0.5 8Z" fill="#222"/></svg>
<svg class="a" style="left:1060.2px;top:214.0px;" width="15" height="15" viewBox="0 0 15 15"><rect x="0.6" y="0.6" width="12.2" height="12" rx="1.2" fill="#f7f9fd" stroke="#7fb1ef" stroke-width="1.2"/><rect x="0.6" y="0.6" width="12.2" height="2" fill="#7fb1ef"/><rect x="12.3" y="12.3" width="2" height="2" fill="#6ac13a"/></svg>
<div class="t" style="left:1078.00px;top:213.64px;font-size:12px;color:#262626;letter-spacing:-0.381px;">Benday.Presidents.Tests.Common</div>
<svg class="a" style="left:1048px;top:235.7px;" width="6" height="8" viewBox="0 0 6 8"><path d="M0.5 0 L5.5 4 L0.5 8Z" fill="#222"/></svg>
<svg class="a" style="left:1060.2px;top:234.0px;" width="15" height="15" viewBox="0 0 15 15"><rect x="0.6" y="0.6" width="12.2" height="12" rx="1.2" fill="#f7f9fd" stroke="#7fb1ef" stroke-width="1.2"/><rect x="0.6" y="0.6" width="12.2" height="2" fill="#7fb1ef"/><rect x="12.3" y="12.3" width="2" height="2" fill="#6ac13a"/></svg>
<div class="t" style="left:1078.00px;top:233.64px;font-size:12px;color:#262626;letter-spacing:-0.350px;">Benday.Presidents.UnitTests</div>
<div class="a" style="left:1021px;top:367px;width:466px;height:72.5px;background:#f9f9f9"></div>
<div class="a" style="left:1021px;top:439.5px;width:466px;height:62.5px;background:#ffffff"></div>
<div class="a" style="left:1254.3px;top:439.5px;width:1.0px;height:62.5px;background:#ededed"></div>
<svg class="a" style="left:1029px;top:379px;" width="11.5" height="12" viewBox="0 0 11.5 12"><rect x="0.6" y="0.6" width="10.3" height="10.8" rx="1.8" fill="none" stroke="#777" stroke-width="1.1"/><path d="M0.6 3.3 H10.9 M0.6 6 H10.9 M0.6 8.7 H10.9 M3.3 0.6 V11.4" stroke="#777" stroke-width="0.8"/></svg>
<div class="t" style="left:1043.50px;top:378.84px;font-size:12px;font-weight:700;color:#2b2b2b;letter-spacing:-0.100px;">Properties</div>
<svg class="a" style="left:1458.7px;top:381.5px;" width="7" height="7" viewBox="0 0 7 7"><rect x="0.5" y="0.5" width="6" height="6" fill="none" stroke="#a3a3a3" stroke-width="1"/><rect x="0.5" y="5" width="6" height="1.5" fill="#a3a3a3"/></svg><svg class="a" style="left:1472.5px;top:382.3px;" width="6" height="6" viewBox="0 0 6 6"><path d="M0.3 0.3 L5.7 5.7 M5.7 0.3 L0.3 5.7" stroke="#a3a3a3" stroke-width="1.1"/></svg>
<div class="a" style="left:1024px;top:406.5px;width:26px;height:25px;border:1px solid #c4c4c4;border-radius:4px;background:#f1f1f1"></div>
<svg class="a" style="left:1030.5px;top:413px;" width="13" height="11" viewBox="0 0 13 11"><rect x="0.6" y="0.6" width="11.8" height="4.4" fill="none" stroke="#444" stroke-width="1.1"/><rect x="0.6" y="5.6" width="11.8" height="4.4" fill="none" stroke="#444" stroke-width="1.1"/></svg>
<div class="t" style="left:1058.90px;top:413.14px;font-size:10px;color:#444444;letter-spacing:0.225px;">a.z</div>
<div class="a" style="left:1487px;top:38px;width:1px;height:819px;background:#c4c4c4"></div>
<div class="a" style="left:1488px;top:38px;width:26px;height:819px;background:#dcdcdc"></div>
<svg class="a" style="left:1494px;top:48px;" width="13" height="14" viewBox="0 0 13 14"><path d="M1.6 3.6 Q2.6 1.2 5.5 1.0 L10.4 0.9 Q11.3 1.0 11.2 2.2 Q11.1 3.6 10 3.7 L5.8 3.6 Q3.5 3.4 1.6 3.6Z" fill="#3a3a3a"/><path d="M5.5 3 L8.4 3 L8.2 12.2 Q7 13.2 5.7 12.2Z" fill="#3a3a3a"/></svg>
<div class="t" style="left:1505.23px;top:66.15px;font-size:12px;color:#333;letter-spacing:-0.092px;transform-origin:0 0;transform:rotate(90deg)">Toolbox</div>
<svg class="a" style="left:1495.2px;top:129.5px;" width="11.5" height="11.5" viewBox="0 0 11.5 11.5"><rect x="0.6" y="0.6" width="10.3" height="10.3" rx="1" fill="none" stroke="#444" stroke-width="1.1"/><rect x="2.5" y="2.5" width="6.5" height="6" fill="#666"/><path d="M4 3.5 V7.5 H7.5" stroke="#ddd" stroke-width="0.9" fill="none"/></svg>
<div class="t" style="left:1505.23px;top:144.80px;font-size:12px;color:#333;letter-spacing:-0.143px;transform-origin:0 0;transform:rotate(90deg)">Document Outline</div>
<div class="a" style="left:352px;top:502px;width:1135px;height:29px;background:#c0c0c0"></div>
<div class="a" style="left:352px;top:509px;width:141px;height:22px;background:#f9f9f9"></div>
<div class="a" style="left:493px;top:509px;width:107px;height:22px;background:#e6e6e6"></div>
<div class="a" style="left:600px;top:530px;width:887px;height:1px;background:#b9b9b9"></div>
<svg class="a" style="left:362px;top:513.5px;" width="8" height="12" viewBox="0 0 8 12"><path d="M5.2 0 L0.8 6.6 L3.6 6.6 L2.4 12 L7.2 4.9 L4.3 4.9 L5.6 0Z" fill="#3a3a3a"/></svg>
<div class="t" style="left:375.35px;top:514.74px;font-size:12px;font-weight:700;color:#2b2b2b;letter-spacing:-0.177px;">Test Results</div>
<svg class="a" style="left:466px;top:518.2px;" width="7" height="7" viewBox="0 0 7 7"><rect x="0.5" y="0.5" width="6" height="6" fill="none" stroke="#a3a3a3" stroke-width="1"/><rect x="0.5" y="5" width="6" height="1.5" fill="#a3a3a3"/></svg><svg class="a" style="left:479.8px;top:519.0px;" width="6" height="6" viewBox="0 0 6 6"><path d="M0.3 0.3 L5.7 5.7 M5.7 0.3 L0.3 5.7" stroke="#a3a3a3" stroke-width="1.1"/></svg>
<svg class="a" style="left:502.2px;top:514.3px;" width="11.5" height="11.5" viewBox="0 0 11.5 11.5"><circle cx="5.75" cy="5.75" r="5.6" fill="#777"/><path d="M3.6 3.6 L7.9 7.9 M7.9 3.6 L3.6 7.9" stroke="#e6e6e6" stroke-width="1.3"/></svg>
<div class="t" style="left:516.60px;top:514.74px;font-size:12px;font-weight:700;color:#8a8a8a;letter-spacing:-0.290px;">Errors</div>
<div class="a" style="left:352px;top:531px;width:1135px;height:43.5px;background:#f9f9f9"></div>
<svg class="a" style="left:362.15px;top:549.5px;" width="12" height="12" viewBox="0 0 12 12"><circle cx="6" cy="6" r="5.6" fill="#80c342"/><path d="M3.3 6.1 L5.2 7.9 L8.8 4.3" fill="none" stroke="#fff" stroke-width="1.2"/></svg>
<div class="t" style="left:377.70px;top:548.80px;font-size:13px;color:#262626;letter-spacing:0.017px;">Successful Tests</div>
<div class="btn" style="left:483.3px;top:542.3px;width:132.3px;height:25px"></div>
<svg class="a" style="left:490.7px;top:549.9px;" width="11" height="11" viewBox="0 0 11 11"><circle cx="5.5" cy="5.5" r="5.4" fill="#a9b8c6"/><text x="5.5" y="8.8" font-size="9" font-family="Liberation Sans" font-weight="700" fill="#fff" text-anchor="middle">?</text></svg>
<div class="t" style="left:505.10px;top:548.80px;font-size:13px;color:#262626;letter-spacing:0.029px;">Inconclusive Tests</div>
<div class="btn" style="left:619.5px;top:542.3px;width:95px;height:25px"></div>
<svg class="a" style="left:626.4px;top:549.9px;" width="11" height="11" viewBox="0 0 11 11"><circle cx="5.5" cy="5.5" r="5.4" fill="#ee6345"/><path d="M6.3 1.8 L3.4 6 L5.4 6 L4.6 9.3 L7.6 5 L5.6 5Z" fill="#fff"/></svg>
<div class="t" style="left:641.55px;top:548.80px;font-size:13px;color:#262626;letter-spacing:-0.036px;">Failed Tests</div>
<div class="btn" style="left:718.6px;top:542.3px;width:105px;height:25px"></div>
<svg class="a" style="left:725.5px;top:549.9px;" width="11" height="11" viewBox="0 0 11 11"><circle cx="5.5" cy="5.5" r="5.4" fill="#f2c012"/><path d="M2.5 3 L5.3 5.5 L2.5 8Z M5.6 3 L8.4 5.5 L5.6 8Z" fill="#fff"/></svg>
<div class="t" style="left:740.00px;top:548.80px;font-size:13px;color:#262626;letter-spacing:0.079px;">Ignored Tests</div>
<svg class="a" style="left:834px;top:550.2px;" width="12" height="9.3" viewBox="0 0 12 9.3"><rect x="0" y="0" width="12" height="9.3" rx="0.8" fill="#3f3f3f"/><path d="M2 2.2 L3.8 3.6 L2 5" fill="none" stroke="#ddd" stroke-width="0.8"/><path d="M4.3 5.3 H6.3" stroke="#ddd" stroke-width="0.8"/></svg>
<div class="t" style="left:849.40px;top:548.80px;font-size:13px;color:#262626;letter-spacing:0.010px;">Output</div>
<div class="a" style="left:905px;top:544.4px;width:1px;height:20.300000000000068px;background:#d4d4d4"></div>
<div class="a" style="left:921.1px;top:545.4px;width:89.3px;height:19px;border:1px solid #b9b9b9;border-radius:3px;background:#e3e3e3"></div>
<svg class="a" style="left:924.6px;top:549.5px;" width="13" height="11.5" viewBox="0 0 13 11.5"><rect x="0" y="0" width="1.3" height="8.5" fill="#82c341"/><rect x="2.6" y="1.2" width="1.3" height="8.5" fill="#82c341"/><path d="M5 1.9 L12.9 6.3 L5 10.8Z" fill="#82c341"/></svg>
<div class="t" style="left:940.15px;top:548.80px;font-size:13px;color:#262626;letter-spacing:-0.050px;">Rerun Tests</div>
<div class="a" style="left:1024.4px;top:549.7px;width:10.599999999999909px;height:10.5px;background:#f7c4bb"></div>
<div class="a" style="left:352px;top:574.5px;width:1135px;height:262.29999999999995px;background:#ffffff"></div>
<svg class="a" style="left:367.6px;top:579.7px;" width="13" height="13" viewBox="0 0 13 13"><circle cx="6.5" cy="6.5" r="6.4" fill="#8ab8ee"/><rect x="5.8" y="5.3" width="1.5" height="5" fill="#fff"/><circle cx="6.55" cy="3.4" r="0.95" fill="#fff"/></svg>
<div class="t" style="left:386.30px;top:579.60px;font-size:13px;color:#262626;letter-spacing:0.047px;">Test results for</div>
<div class="t" style="left:475.45px;top:579.60px;font-size:13px;font-weight:700;color:#262626;letter-spacing:-0.008px;">Benday.Presidents-m8</div>
<div class="t" style="left:618.45px;top:579.60px;font-size:13px;color:#262626;letter-spacing:0.079px;">configuration</div>
<div class="t" style="left:696.95px;top:579.60px;font-size:13px;font-weight:700;color:#262626;letter-spacing:-0.212px;">Debug</div>
<div class="a" style="left:354.2px;top:828px;width:1038.3px;height:6.5px;background:#c1c1c1;border-radius:4px"></div>
<div class="a" style="left:352px;top:836.8px;width:1135px;height:20.200000000000045px;background:#f9f9f9"></div>
<div class="t" style="left:358.10px;top:841.14px;font-size:12px;font-weight:700;color:#262626;letter-spacing:0.490px;">Passed</div>
<div class="t" style="left:402.00px;top:841.14px;font-size:12px;color:#262626;">:</div>
<div class="t" style="left:408.10px;top:841.14px;font-size:12px;color:#262626;letter-spacing:0.650px;">103</div>
<div class="t" style="left:439.30px;top:841.14px;font-size:12px;font-weight:700;color:#262626;letter-spacing:0.400px;">Failed</div>
<div class="t" style="left:475.40px;top:841.14px;font-size:12px;color:#262626;">:</div>
<div class="t" style="left:482.55px;top:841.14px;font-size:12px;color:#262626;">0</div>
<div class="t" style="left:500.30px;top:841.14px;font-size:12px;font-weight:700;color:#262626;letter-spacing:0.350px;">Errors</div>
<div class="t" style="left:537.80px;top:841.14px;font-size:12px;color:#262626;">:</div>
<div class="t" style="left:544.55px;top:841.14px;font-size:12px;color:#262626;">0</div>
<div class="t" style="left:562.20px;top:841.14px;font-size:12px;font-weight:700;color:#262626;letter-spacing:0.277px;">Inconclusive</div>
<div class="t" style="left:637.70px;top:841.14px;font-size:12px;color:#262626;">:</div>
<div class="t" style="left:645.15px;top:841.14px;font-size:12px;color:#262626;">0</div>
<div class="t" style="left:662.20px;top:841.14px;font-size:12px;font-weight:700;color:#262626;letter-spacing:0.675px;">Invalid</div>
<div class="t" style="left:703.70px;top:841.14px;font-size:12px;color:#262626;">:</div>
<div class="t" style="left:710.55px;top:841.14px;font-size:12px;color:#262626;">0</div>
<div class="t" style="left:727.20px;top:841.14px;font-size:12px;font-weight:700;color:#262626;letter-spacing:0.683px;">Ignored</div>
<div class="t" style="left:774.70px;top:841.14px;font-size:12px;color:#262626;">:</div>
<div class="t" style="left:781.55px;top:841.14px;font-size:12px;color:#262626;">0</div>
<div class="t" style="left:799.45px;top:841.14px;font-size:12px;font-weight:700;color:#262626;letter-spacing:0.575px;">Skipped</div>
<div class="t" style="left:849.00px;top:841.14px;font-size:12px;color:#262626;">:</div>
<div class="t" style="left:855.55px;top:841.14px;font-size:12px;color:#262626;">0</div>
<div class="t" style="left:873.15px;top:841.14px;font-size:12px;font-weight:700;color:#262626;letter-spacing:0.667px;">Time</div>
<div class="t" style="left:902.70px;top:841.14px;font-size:12px;color:#262626;">:</div>
<div class="t" style="left:909.85px;top:841.14px;font-size:12px;color:#262626;letter-spacing:0.657px;">00:00:03.4810520</div>
<div class="a" style="left:0px;top:856.5px;width:1514px;height:1.0px;background:#c4c4c4"></div>
<div class="a" style="left:0px;top:857.5px;width:1514px;height:26.5px;background:#dcdcdc"></div>
<div class="a" style="left:1297px;top:857.5px;width:1px;height:26.5px;background:#c8c8c8"></div>
<svg class="a" style="left:1311px;top:865.5px;" width="11.5" height="10" viewBox="0 0 11.5 10"><path d="M0.8 5.2 L4 8.6 L10.8 0.8" fill="none" stroke="#444" stroke-width="1.6"/></svg>
<div class="t" style="left:1326.75px;top:865.04px;font-size:12px;color:#555555;">Tasks</div>
<svg class="a" style="left:1379.5px;top:866.4px;" width="12.5" height="9" viewBox="0 0 12.5 9"><rect x="0" y="0" width="12.5" height="9" rx="0.8" fill="#3f3f3f"/><path d="M2 2 L3.8 3.4 L2 4.8" fill="none" stroke="#ddd" stroke-width="0.8"/><path d="M4.3 5.2 H6.3" stroke="#ddd" stroke-width="0.8"/></svg>
<div class="t" style="left:1395.20px;top:865.04px;font-size:12px;font-weight:700;color:#525252;letter-spacing:-0.318px;">Package Console</div>
<svg class="a" style="left:1502px;top:872px;" width="12" height="12" viewBox="0 0 12 12"><path d="M12 1 L1 12 M12 4.5 L4.5 12 M12 8 L8 12" stroke="#fff" stroke-width="1" stroke-dasharray="1.2 0.8"/></svg>
</div></body></html>
